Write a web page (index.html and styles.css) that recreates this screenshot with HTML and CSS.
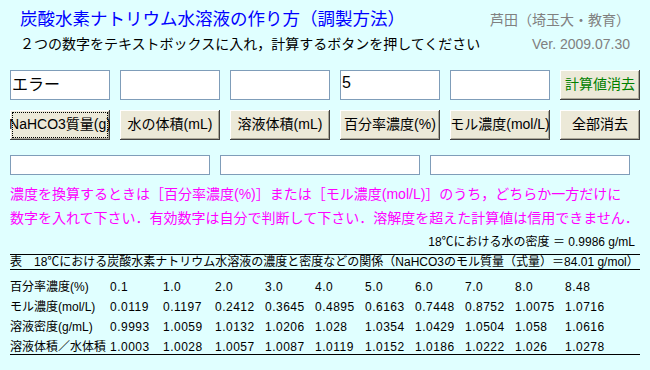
FILE: index.html
```html
<!DOCTYPE html>
<html lang="ja">
<head>
  <meta charset="UTF-8">
  <title>炭酸水素ナトリウム水溶液の作り方</title>
  <link rel="stylesheet" href="styles.css">
</head>
<body>
  <header class="head">
    <div class="head-row">
      <h1 class="title">炭酸水素ナトリウム水溶液の作り方（調製方法）</h1>
      <span class="author">芦田（埼玉大・教育）</span>
    </div>
    <div class="head-row lead-row">
      <p class="lead">２つの数字をテキストボックスに入れ，計算するボタンを押してください</p>
      <span class="version">Ver. 2009.07.30</span>
    </div>
  </header>

  <form class="calc">
    <input type="text" class="field" value="エラー">
    <input type="text" class="field" value="">
    <input type="text" class="field" value="">
    <input type="text" class="field" value="5">
    <input type="text" class="field" value="">
    <button type="button" class="btn btn-clear"><span class="btn-label">計算値消去</span></button>

    <button type="button" class="btn is-focused"><span class="btn-label">NaHCO3質量(g)</span></button>
    <button type="button" class="btn"><span class="btn-label">水の体積(mL)</span></button>
    <button type="button" class="btn"><span class="btn-label">溶液体積(mL)</span></button>
    <button type="button" class="btn"><span class="btn-label">百分率濃度(%)</span></button>
    <button type="button" class="btn"><span class="btn-label">モル濃度(mol/L)</span></button>
    <button type="button" class="btn"><span class="btn-label">全部消去</span></button>
  </form>

  <div class="wide-row">
    <input type="text" class="field field-wide" value="">
    <input type="text" class="field field-wide" value="">
    <input type="text" class="field field-wide" value="">
  </div>

  <p class="notice">濃度を換算するときは［百分率濃度(%)］または［モル濃度(mol/L)］のうち，どちらか一方だけに<br>数字を入れて下さい．有効数字は自分で判断して下さい．溶解度を超えた計算値は信用できません．</p>

  <p class="water">18℃における水の密度 ＝ 0.9986 g/mL</p>

  <div class="table">
    <div class="caption">表　18℃における炭酸水素ナトリウム水溶液の濃度と密度などの関係（NaHCO3のモル質量（式量）＝84.01 g/mol）</div>
    <div class="rows">
      <div class="row">
        <span class="label">百分率濃度(%)</span>
        <span>0.1</span><span>1.0</span><span>2.0</span><span>3.0</span><span>4.0</span>
        <span>5.0</span><span>6.0</span><span>7.0</span><span>8.0</span><span>8.48</span>
      </div>
      <div class="row">
        <span class="label">モル濃度(mol/L)</span>
        <span>0.0119</span><span>0.1197</span><span>0.2412</span><span>0.3645</span><span>0.4895</span>
        <span>0.6163</span><span>0.7448</span><span>0.8752</span><span>1.0075</span><span>1.0716</span>
      </div>
      <div class="row">
        <span class="label">溶液密度(g/mL)</span>
        <span>0.9993</span><span>1.0059</span><span>1.0132</span><span>1.0206</span><span>1.028</span>
        <span>1.0354</span><span>1.0429</span><span>1.0504</span><span>1.058</span><span>1.0616</span>
      </div>
      <div class="row">
        <span class="label">溶液体積／水体積</span>
        <span>1.0003</span><span>1.0028</span><span>1.0057</span><span>1.0087</span><span>1.0119</span>
        <span>1.0152</span><span>1.0186</span><span>1.0222</span><span>1.026</span><span>1.0278</span>
      </div>
    </div>
  </div>
</body>
</html>
```

FILE: styles.css
```css
body {
  margin: 0;
  background-color: #e0ffff;
  color: #000;
  font-family: "Liberation Sans", "Noto Sans CJK JP", sans-serif;
  font-size: 14px;
}
p, h1 {
  margin: 0;
}
.head {
  padding: 7px 20px 0 20px;
}
.head-row {
  display: flex;
  justify-content: space-between;
  align-items: baseline;
  white-space: nowrap;
}
.title {
  font-size: 17.5px;
  font-weight: normal;
  line-height: 24px;
  color: #0000ff;
}
.author {
  color: #808080;
  font-size: 14px;
}
.lead-row {
  margin-top: 3px;
}
.lead {
  line-height: 20px;
}
.version {
  color: #808080;
  font-size: 14px;
}
.calc {
  display: grid;
  grid-template-columns: repeat(5, 100px) 80px;
  grid-auto-rows: 30px;
  gap: 10px;
  margin: 16px 0 0 10px;
}
.field {
  box-sizing: border-box;
  width: 100%;
  height: 100%;
  margin: 0;
  padding: 0 1px 5px 1px;
  border: 1px solid #7f9db9;
  background: #fff;
  font-family: "Liberation Sans", "Noto Sans CJK JP", sans-serif;
  font-size: 16px;
  color: #000;
  outline: none;
}
.btn {
  box-sizing: border-box;
  margin: 0;
  padding: 0 0 4px 0;
  overflow: hidden;
  white-space: nowrap;
  text-align: center;
  border: none;
  background-color: #ece9d8;
  box-shadow: inset -1px -1px #404040, inset 1px 1px #ffffff, inset -2px -2px #aca899;
  font-family: "Liberation Sans", "Noto Sans CJK JP", sans-serif;
  font-size: 14px;
  color: #000;
}
.btn-label {
  display: inline-block;
  margin: 0 -20px;
}
.btn-clear {
  color: #008000;
}
.is-focused {
  outline: 1px dotted #000;
  outline-offset: -3px;
}
.wide-row {
  display: flex;
  gap: 10px;
  margin: 15px 0 0 10px;
}
.field-wide {
  width: 200px;
  height: 20px;
  padding: 0 1px;
  font-size: 14px;
}
.notice {
  margin-top: 7px;
  padding-left: 10px;
  color: #ff00ff;
  font-size: 14px;
  line-height: 24px;
  white-space: nowrap;
}
.water {
  margin-top: 4px;
  padding-right: 15px;
  text-align: right;
  font-size: 12px;
  line-height: 16px;
}
.table {
  margin: 4px 10px 0 10px;
  border-top: 1px solid #000;
  font-size: 12px;
}
.caption {
  line-height: 14px;
  border-bottom: 1px solid #000;
  white-space: nowrap;
}
.rows {
  box-sizing: border-box;
  height: 85px;
  padding-top: 7px;
  border-bottom: 1px solid #000;
}
.row {
  display: grid;
  grid-template-columns: 100px 53px 52px repeat(7, 50px) 1fr;
  line-height: 20px;
  white-space: nowrap;
}
.row span {
  letter-spacing: 0.5px;
}
.row .label {
  letter-spacing: 0;
}
```
